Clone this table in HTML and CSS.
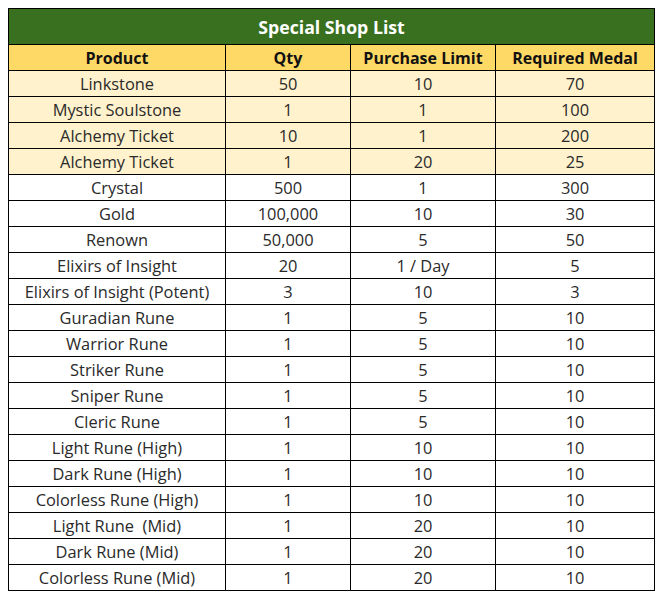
FILE: index.html
```html
<!DOCTYPE html>
<html>
<head>
<meta charset="utf-8">
<link rel="stylesheet" href="styles.css">
</head>
<body>
<table class="shop">
  <colgroup>
    <col class="c1"><col class="c2"><col class="c3"><col class="c4">
  </colgroup>
  <tr class="title"><td colspan="4">Special Shop List</td></tr>
  <tr class="head"><td>Product</td><td>Qty</td><td>Purchase Limit</td><td>Required Medal</td></tr>
  <tr class="hl"><td>Linkstone</td><td>50</td><td>10</td><td>70</td></tr>
  <tr class="hl"><td>Mystic Soulstone</td><td>1</td><td>1</td><td>100</td></tr>
  <tr class="hl"><td>Alchemy Ticket</td><td>10</td><td>1</td><td>200</td></tr>
  <tr class="hl"><td>Alchemy Ticket</td><td>1</td><td>20</td><td>25</td></tr>
  <tr><td>Crystal</td><td>500</td><td>1</td><td>300</td></tr>
  <tr><td>Gold</td><td>100,000</td><td>10</td><td>30</td></tr>
  <tr><td>Renown</td><td>50,000</td><td>5</td><td>50</td></tr>
  <tr><td>Elixirs of Insight</td><td>20</td><td>1 / Day</td><td>5</td></tr>
  <tr><td>Elixirs of Insight (Potent)</td><td>3</td><td>10</td><td>3</td></tr>
  <tr><td>Guradian Rune</td><td>1</td><td>5</td><td>10</td></tr>
  <tr><td>Warrior Rune</td><td>1</td><td>5</td><td>10</td></tr>
  <tr><td>Striker Rune</td><td>1</td><td>5</td><td>10</td></tr>
  <tr><td>Sniper Rune</td><td>1</td><td>5</td><td>10</td></tr>
  <tr><td>Cleric Rune</td><td>1</td><td>5</td><td>10</td></tr>
  <tr><td>Light Rune (High)</td><td>1</td><td>10</td><td>10</td></tr>
  <tr><td>Dark Rune (High)</td><td>1</td><td>10</td><td>10</td></tr>
  <tr><td>Colorless Rune (High)</td><td>1</td><td>10</td><td>10</td></tr>
  <tr><td>Light Rune&nbsp; (Mid)</td><td>1</td><td>20</td><td>10</td></tr>
  <tr><td>Dark Rune (Mid)</td><td>1</td><td>20</td><td>10</td></tr>
  <tr><td>Colorless Rune (Mid)</td><td>1</td><td>20</td><td>10</td></tr>
</table>
</body>
</html>
```
FILE: styles.css
```css
html, body {
  margin: 0;
  background: #ffffff;
}
body {
  padding: 8px;
  font-family: "Open Sans", "Noto Sans CJK KR", sans-serif;
}
.shop {
  border-collapse: collapse;
  table-layout: fixed;
  width: 646px;
  color: #2a2a2a;
  font-size: 16.4px;
}
.c1 { width: 217px; }
.c2 { width: 125px; }
.c3 { width: 145px; }
.c4 { width: 159px; }
.shop td {
  border: 1px solid #000000;
  text-align: center;
  padding: 0;
  height: 25px;
  line-height: 24px;
  white-space: nowrap;
}
.title td {
  background: #38701f;
  color: #ffffff;
  font-weight: 700;
  font-size: 17.7px;
  height: 35px;
}
.head td {
  background: #ffd966;
  font-weight: 700;
  font-size: 16px;
  color: #111111;
}
.hl td {
  background: #fff2cc;
}
```
